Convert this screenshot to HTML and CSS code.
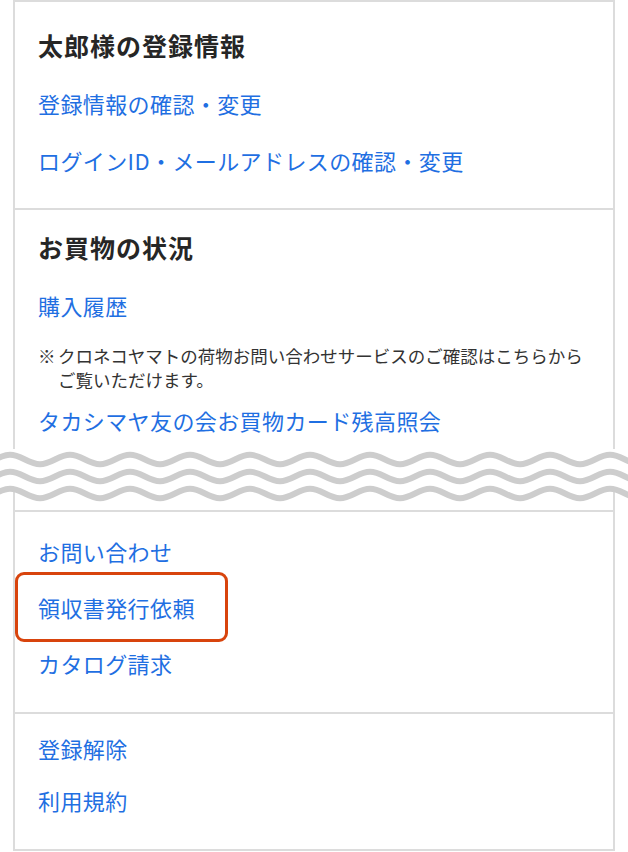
FILE: index.html
```html
<!DOCTYPE html>
<html lang="ja">
<head>
    <meta charset="UTF-8">
    <meta name="viewport" content="width=device-width, initial-scale=1.0">
    <title>マイページ</title>

    <link rel="stylesheet" href="styles.css">
</head>
<body>

    <div class="page">
    <div class="menu-card">

        <div class="menu-section section-account">
            <h2 class="menu-title">太郎様の登録情報</h2>
            <a class="menu-link" href="#">登録情報の確認・変更</a>
            <a class="menu-link" href="#">ログインID・メールアドレスの確認・変更</a>
        </div>

        <div class="menu-section section-shopping">
            <h2 class="menu-title">お買物の状況</h2>
            <a class="menu-link" href="#">購入履歴</a>
            <p class="menu-note">
                <span class="note-mark">※</span>
                <span>クロネコヤマトの荷物お問い合わせサービスのご確認はこちらからご覧いただけます。</span>
            </p>
            <a class="menu-link" href="#">タカシマヤ友の会お買物カード残高照会</a>
        </div>

        <!-- omitted part of the page -->
        <div class="cut">
            <svg width="628" height="53" viewBox="0 0 628 53">
                <defs>
                    <path id="wave" d="M-20,4.75 c11,0 19,-9.5 30,-9.5 s19,9.5 30,9.5 s19,-9.5 30,-9.5 s19,9.5 30,9.5 s19,-9.5 30,-9.5 s19,9.5 30,9.5 s19,-9.5 30,-9.5 s19,9.5 30,9.5 s19,-9.5 30,-9.5 s19,9.5 30,9.5 s19,-9.5 30,-9.5 s19,9.5 30,9.5 s19,-9.5 30,-9.5 s19,9.5 30,9.5 s19,-9.5 30,-9.5 s19,9.5 30,9.5 s19,-9.5 30,-9.5 s19,9.5 30,9.5 s19,-9.5 30,-9.5 s19,9.5 30,9.5 s19,-9.5 30,-9.5 s19,9.5 30,9.5"/>
                </defs>
                <g transform="translate(0,44.5)">
                    <path class="wave-fill" d="M-20,4.75 c11,0 19,-9.5 30,-9.5 s19,9.5 30,9.5 s19,-9.5 30,-9.5 s19,9.5 30,9.5 s19,-9.5 30,-9.5 s19,9.5 30,9.5 s19,-9.5 30,-9.5 s19,9.5 30,9.5 s19,-9.5 30,-9.5 s19,9.5 30,9.5 s19,-9.5 30,-9.5 s19,9.5 30,9.5 s19,-9.5 30,-9.5 s19,9.5 30,9.5 s19,-9.5 30,-9.5 s19,9.5 30,9.5 s19,-9.5 30,-9.5 s19,9.5 30,9.5 s19,-9.5 30,-9.5 s19,9.5 30,9.5 s19,-9.5 30,-9.5 s19,9.5 30,9.5 V-45 H-20 Z"/>
                </g>
                <use class="wave-line" href="#wave" transform="translate(0,10.5)"/>
                <use class="wave-line" href="#wave" transform="translate(0,27.5)"/>
                <use class="wave-line" href="#wave" transform="translate(0,44.5)"/>
            </svg>
        </div>

        <div class="menu-section section-support">
            <a class="menu-link" href="#">お問い合わせ</a>
            <a class="menu-link is-marked" href="#">領収書発行依頼</a>
            <a class="menu-link" href="#">カタログ請求</a>
        </div>

        <div class="menu-section section-other">
            <a class="menu-link" href="#">登録解除</a>
            <a class="menu-link" href="#">利用規約</a>
        </div>

    </div>
    </div>

</body>
</html>
```

FILE: styles.css
```css
body
{
    margin: 0;
    background: white;
    font-family: "Noto Sans CJK JP", "Noto Sans", sans-serif;
}
.page
{
    padding: 0 13px;
}
.menu-card
{
    border: 2px solid #dcdcdc;
    background: white;
}
.menu-section
{
    display: flex;
    flex-direction: column;
    gap: 21px;
    padding: 20px 23px 30px 23px;
    border-top: 2px solid #dcdcdc;
}
.section-account
{
    border-top: none;
    padding-top: 26px;
}
.section-shopping
{
    padding-bottom: 11px;
}
.section-support
{
    gap: 20px;
    padding-top: 21px;
    padding-bottom: 31px;
}
.section-other
{
    gap: 16px;
    padding-top: 16px;
    padding-bottom: 31px;
}
.menu-title
{
    margin: -1px 0 1px 0;
    font-size: 25px;
    line-height: 36px;
    letter-spacing: 1px;
    font-weight: bold;
    color: #262626;
}
.menu-link
{
    font-size: 22px;
    line-height: 36px;
    letter-spacing: 0.4px;
    color: #1f6fe2;
    text-decoration: none;
}
.menu-note
{
    display: flex;
    margin: 0 0 -11px 0;
    font-size: 17.5px;
    line-height: 24px;
    color: #333;
}
.note-mark
{
    flex: none;
    width: 20px;
}
.is-marked
{
    align-self: flex-start;
    border: 3px solid #d8440d;
    border-radius: 9px;
    padding: 14px 30px 14px 20px;
    margin: -17px 0 -17px -23px;
}
.cut
{
    margin: 0 -15px 8px -15px;
    height: 53px;
}
.cut svg
{
    display: block;
}
.wave-fill
{
    fill: white;
}
.wave-line
{
    fill: none;
    stroke: #cdcdcd;
    stroke-width: 6;
}
```
